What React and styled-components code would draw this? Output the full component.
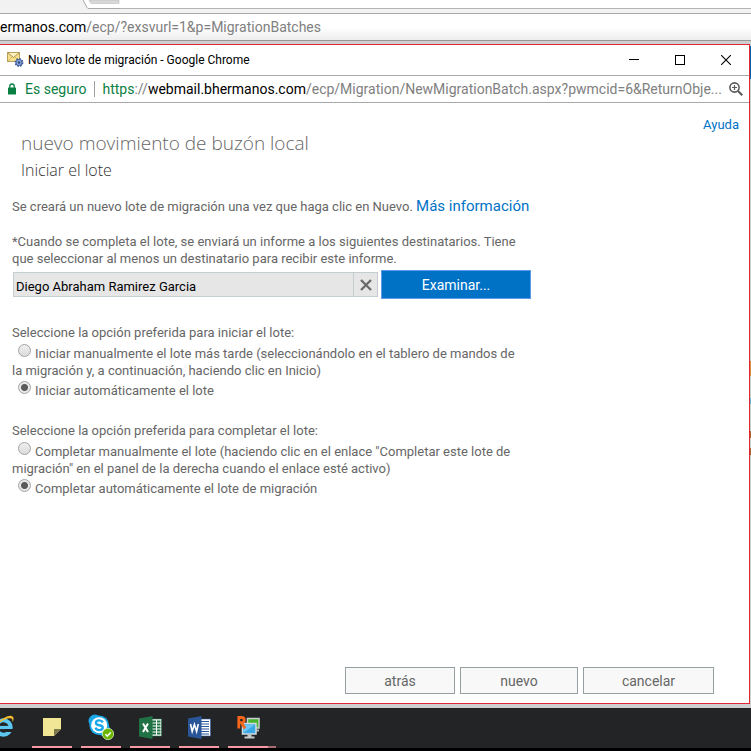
import React, { useState } from 'react';
import styled, { createGlobalStyle } from 'styled-components';

function MailGearIcon() {
    return (
        <svg width="17" height="16" viewBox="0 0 17 16" aria-hidden="true">
            <rect x="0.5" y="0.5" width="12" height="9" fill="#f7e08a" stroke="#b8a05c" />
            <path d="M1 1l5.5 4.500L12 1" fill="#fdf3c0" stroke="#a58f4c" />
            <path d="M1 9l4-4M12 9L8 5" stroke="#d3bb6c" fill="none" />
            <circle cx="12" cy="10.5" r="3.600" fill="#5673b4" stroke="#3c5896" strokeWidth="1.6" strokeDasharray="1.6 1.2" />
            <circle cx="12" cy="10.5" r="2.4" fill="#8ea8dc" />
            <circle cx="12" cy="10.5" r="1.2" fill="#2b4379" />
        </svg>
    );
}

function LockIcon() {
    return (
        <svg width="8" height="12" viewBox="0 0 8 12" aria-hidden="true">
            <path d="M1.8 5V3.2a2.2 2.2 0 0 1 4.4 0V5" fill="none" stroke="#0b8043" strokeWidth="1.3" />
            <rect x="0" y="4.5" width="8" height="7" rx="0.6" fill="#0b8043" />
        </svg>
    );
}

function ZoomIcon() {
    return (
        <svg width="14" height="14" viewBox="0 0 14 14" fill="none" stroke="#5a5a5a" aria-hidden="true">
            <circle cx="5.5" cy="5.5" r="4.6" strokeWidth="1.6" />
            <path d="M9 9l4.3 4.3" strokeWidth="2" />
            <path d="M3 5.5h5M5.5 3v5" strokeWidth="1.2" />
        </svg>
    );
}

function MinimizeIcon() {
    return (
        <svg width="10" height="10" viewBox="0 0 10 10" aria-hidden="true">
            <path d="M0 4.5h10" stroke="#000" />
        </svg>
    );
}

function MaximizeIcon() {
    return (
        <svg width="10" height="10" viewBox="0 0 10 10" aria-hidden="true">
            <rect x="0.5" y="0.5" width="9" height="9" fill="none" stroke="#000" />
        </svg>
    );
}

function CloseIcon() {
    return (
        <svg width="10" height="10" viewBox="0 0 10 10" aria-hidden="true">
            <path d="M0 0l10 10M10 0L0 10" stroke="#000" strokeWidth="1.1" />
        </svg>
    );
}

function ClearIcon() {
    return (
        <svg width="12" height="12" viewBox="0 0 12 12" aria-hidden="true">
            <path d="M1 1l10 10M11 1L1 11" stroke="#6b6b6b" strokeWidth="2.4" />
        </svg>
    );
}

function TabShape() {
    return (
        <svg width="120" height="9" viewBox="0 0 120 9" aria-hidden="true">
            <path d="M83 0l4 7.5q.5 1 2 1H120V0z" fill="#fff" />
            <path d="M83 0l4 7.5q.5 1 2 1H120" fill="none" stroke="#a9a9a9" />
            <path d="M89 0h30v3.500h-27q-1.500 0-2-1.500z" fill="#d8d8d8" stroke="#bdbdbd" strokeWidth="0.6" />
        </svg>
    );
}

function ExplorerIcon() {
    return (
        <svg width="15" height="24" viewBox="0 0 15 24" aria-hidden="true">
            <circle cx="3.500" cy="12.500" r="7.200" fill="none" stroke="#5cc8f2" strokeWidth="4" />
            <path d="M-3 12.500H11" stroke="#5cc8f2" strokeWidth="3.200" />
            <path d="M5 14.100H14V17H7z" fill="#232426" />
            <path d="M-1 6.500C5 2-.5 5.500 4 3C8 .8 11 .2 12.600 1.500C14.200 2.800 13.600 5.500 12.500 7.500C12.800 4.800 12.300 3.500 10.500 3.200C7.500 2.700 3 4.800-1 8z" fill="#f3bd2f" />
        </svg>
    );
}

function NotesIcon() {
    return (
        <svg width="18" height="18" viewBox="0 0 18 18" aria-hidden="true">
            <path d="M0 0h18v11l-7 7H0z" fill="#f1e596" />
            <path d="M11 18V11h7z" fill="#7c764c" />
        </svg>
    );
}

function SkypeIcon() {
    return (
        <svg width="26" height="26" viewBox="0 0 26 26" aria-hidden="true">
            <circle cx="7" cy="7" r="6.500" fill="#19a9ea" />
            <circle cx="15.500" cy="15.500" r="6.500" fill="#19a9ea" />
            <circle cx="11.200" cy="11.200" r="9.800" fill="#19a9ea" />
            <circle cx="11.200" cy="11.200" r="8" fill="#fff" />
            <path d="M14.800 8.400C14 6.900 12.700 6.400 11.200 6.400C9.300 6.400 7.900 7.200 7.900 8.900C7.900 12 14.700 10.500 14.700 13.500C14.700 15.200 13.100 16.100 11.200 16.100C9.400 16.100 8.100 15.400 7.500 13.700" fill="none" stroke="#19a9ea" strokeWidth="2.400" />
            <circle cx="20" cy="20" r="5.700" fill="#6bb700" stroke="#e9f6d5" strokeWidth="0.700" />
            <path d="M17.400 20.200l1.900 1.900 3.500-3.700" fill="none" stroke="#fff" strokeWidth="1.500" />
        </svg>
    );
}

function ExcelIcon() {
    return (
        <svg width="23" height="23" viewBox="0 0 23 23" aria-hidden="true">
            <rect x="12" y="3" width="10.500" height="17" fill="#fff" stroke="#207245" strokeWidth="0.600" />
            <path d="M13 5.500h4M18 5.500h3.500M13 8.500h4M18 8.500h3.500M13 11.500h4M18 11.500h3.500M13 14.500h4M18 14.500h3.500M13 17.500h4M18 17.500h3.500" stroke="#207245" strokeWidth="1.800" />
            <path d="M0 2.500L13.500 0v23L0 20.500z" fill="#207245" />
            <path d="M4 7.500l5 8.500M9 7.500l-5 8.500" stroke="#fff" strokeWidth="2" />
        </svg>
    );
}

function WordIcon() {
    return (
        <svg width="23" height="23" viewBox="0 0 23 23" aria-hidden="true">
            <rect x="12" y="3" width="10.500" height="17" fill="#fff" stroke="#2a5699" strokeWidth="0.600" />
            <path d="M13 5.500h8M13 8h8M13 10.500h8M13 13h8M13 15.500h8M13 18h8" stroke="#2a5699" strokeWidth="1.100" />
            <path d="M0 2.500L13.500 0v23L0 20.500z" fill="#2a5699" />
            <path d="M2.500 8l1.700 7.500 2.200-7 2.200 7 1.700-7.500" fill="none" stroke="#fff" strokeWidth="1.600" />
        </svg>
    );
}

function RemoteIcon() {
    return (
        <svg width="23" height="23" viewBox="0 0 23 23" aria-hidden="true">
            <rect x="10.500" y="2.500" width="11.500" height="9.500" fill="#46b52c" stroke="#c9d0cf" strokeWidth="1.500" />
            <path d="M18 14.500h4" stroke="#aeb6b8" strokeWidth="2" />
            <rect x="5.500" y="7.500" width="13.500" height="10.500" fill="#3aa8e4" stroke="#d4dce0" strokeWidth="1.500" />
            <path d="M6.500 17L18 8.500H6.500z" fill="#6cc5f2" />
            <path d="M10.500 18.500h4v2h3v2h-10v-2h3z" fill="#c3c9cb" />
            <path d="M1.800 12.500V1.500H4.500Q7.300 1.500 7.300 4T4.500 6.700H2M4.500 6.700L8 12.500" fill="none" stroke="#f4661b" strokeWidth="2.800" />
        </svg>
    );
}

const OPTION_GROUPS = [
    {
        name: 'start',
        title: 'Seleccione la opción preferida para iniciar el lote:',
        options: [
            {
                value: 'manual',
                text: 'Iniciar manualmente el lote más tarde (seleccionándolo en el tablero de mandos de la migración y, a continuación, haciendo clic en Inicio)',
            },
            { value: 'auto', text: 'Iniciar automáticamente el lote' },
        ],
    },
    {
        name: 'complete',
        title: 'Seleccione la opción preferida para completar el lote:',
        options: [
            {
                value: 'manual',
                text: 'Completar manualmente el lote (haciendo clic en el enlace "Completar este lote de migración" en el panel de la derecha cuando el enlace esté activo)',
            },
            { value: 'auto', text: 'Completar automáticamente el lote de migración' },
        ],
    },
];

const TASKS = [
    { label: 'Notas', icon: <NotesIcon /> },
    { label: 'Skype', icon: <SkypeIcon /> },
    { label: 'Excel', icon: <ExcelIcon /> },
    { label: 'Word', icon: <WordIcon /> },
    { label: 'Escritorio remoto', icon: <RemoteIcon /> },
];

function OptionGroup({ group }) {
    const [selected, setSelected] = useState('auto');

    return (
        <Group>
            <GroupTitle>{group.title}</GroupTitle>
            {group.options.map((option) => (
                <Option key={option.value}>
                    <Radio
                        type="radio"
                        name={group.name}
                        checked={selected === option.value}
                        onChange={() => setSelected(option.value)}
                    />
                    {option.text}
                </Option>
            ))}
        </Group>
    );
}

function App() {
    const [recipient, setRecipient] = useState('Diego Abraham Ramirez Garcia');

    return (
        <Screen>
            <GlobalStyle />
            <TabStrip>
                <TabShape />
                <TabLine />
            </TabStrip>
            <BackAddress>
                <b>ermanos.com</b>/ecp/?exsvurl=1&amp;p=MigrationBatches
            </BackAddress>
            <Desktop>
                <Window>
                    <TitleBar>
                        <MailGearIcon />
                        <WindowTitle>Nuevo lote de migración - Google Chrome</WindowTitle>
                        <WindowButton aria-label="Minimizar"><MinimizeIcon /></WindowButton>
                        <WindowButton aria-label="Maximizar"><MaximizeIcon /></WindowButton>
                        <WindowButton aria-label="Cerrar"><CloseIcon /></WindowButton>
                    </TitleBar>
                    <AddressBar>
                        <LockIcon />
                        <Secure>Es seguro</Secure>
                        <Url>
                            <i>https</i>://<b>webmail.bhermanos.com</b>/ecp/Migration/NewMigrationBatch.aspx?pwmcid=6&amp;ReturnObje...
                        </Url>
                        <ZoomIcon />
                    </AddressBar>
                    <Page>
                        <Help href="#ayuda">Ayuda</Help>
                        <Title>nuevo movimiento de buzón local</Title>
                        <Subtitle>Iniciar el lote</Subtitle>
                        <Form>
                            <Intro>
                                Se creará un nuevo lote de migración una vez que haga clic en Nuevo.{' '}
                                <MoreLink href="#info">Más información</MoreLink>
                            </Intro>
                            <RecipientLabel htmlFor="recipient">
                                *Cuando se completa el lote, se enviará un informe a los siguientes destinatarios. Tiene que seleccionar al menos un destinatario para recibir este informe.
                            </RecipientLabel>
                            <RecipientRow>
                                <RecipientInput id="recipient" readOnly value={recipient} />
                                <ClearButton type="button" aria-label="Quitar" onClick={() => setRecipient('')}>
                                    <ClearIcon />
                                </ClearButton>
                                <BrowseButton type="button">Examinar...</BrowseButton>
                            </RecipientRow>
                            {OPTION_GROUPS.map((group) => (
                                <OptionGroup key={group.name} group={group} />
                            ))}
                        </Form>
                        <Footer>
                            <FooterButton $width={110}>atrás</FooterButton>
                            <FooterButton $width={118}>nuevo</FooterButton>
                            <FooterButton $width={131}>cancelar</FooterButton>
                        </Footer>
                    </Page>
                </Window>
            </Desktop>
            <Taskbar>
                <BrowserTask aria-label="Internet Explorer"><ExplorerIcon /></BrowserTask>
                {TASKS.map((task) => (
                    <Task key={task.label} aria-label={task.label}>{task.icon}</Task>
                ))}
                <TaskStack />
            </Taskbar>
        </Screen>
    );
}

const GlobalStyle = createGlobalStyle`
    * {
        box-sizing: border-box;
    }

    body {
        margin: 0;
        font-family: Roboto, "Open Sans", sans-serif;
        font-size: 13px;
        color: #666;
    }

    button, input {
        font-family: inherit;
    }

    button {
        padding: 0;
    }

    svg {
        display: block;
        flex: none;
    }
`;

const Screen = styled.div`
    display: flex;
    flex-direction: column;
    min-height: 100vh;
    background: #d3d3d3;
    overflow: hidden;
`;

const TabStrip = styled.div`
    display: flex;
    height: 14px;
    background: #f2f2f2;
    border-bottom: 1px solid #a9a9a9;
`;

const TabLine = styled.div`
    flex: 1;
    height: 9px;
    background: #fff;
    border-bottom: 1px solid #b4b4b4;
`;

const BackAddress = styled.div`
    height: 27px;
    line-height: 27px;
    font-size: 14px;
    color: #808080;
    white-space: nowrap;
    background: linear-gradient(#fff 50%, #ededed);
    border-bottom: 1px solid #979797;

    b {
        font-weight: 400;
        color: #000;
    }
`;

const Desktop = styled.div`
    flex: 1;
    display: flex;
    padding: 3px 1px 4px 0;
    background:
        linear-gradient(#0a5fae, #0a5fae) right 5px / 1px 33px no-repeat,
        linear-gradient(#d98f45, #d98f45) right 320px / 1px 15px no-repeat,
        linear-gradient(#69b4dc, #69b4dc) right 357px / 1px 6px no-repeat,
        linear-gradient(#a86235, #a86235) right 390px / 1px 7px no-repeat,
        linear-gradient(#a86235, #a86235) right 407px / 1px 7px no-repeat,
        #cfcfcf;
`;

const Window = styled.div`
    flex: 1;
    min-width: 0;
    display: flex;
    flex-direction: column;
    background: #fff;
    border: 1px solid #e32636;
    border-left: 0;
`;

const TitleBar = styled.div`
    display: flex;
    align-items: center;
    height: 31px;
    padding-left: 7px;
    border-bottom: 1px solid #a8a8a8;
`;

const WindowTitle = styled.div`
    flex: 1;
    margin-left: 4px;
    font-size: 12px;
    color: #000;
`;

const WindowButton = styled.button`
    display: flex;
    align-items: center;
    justify-content: center;
    width: 46px;
    height: 28px;
    background: none;
    border: 0;
`;

const AddressBar = styled.div`
    display: flex;
    align-items: center;
    height: 27px;
    padding: 0 6px 0 8px;
    font-size: 14px;
    border-bottom: 1px solid #a8a8a8;
`;

const Secure = styled.div`
    margin-left: 9px;
    padding-right: 8px;
    line-height: 16px;
    color: #0b8043;
    border-right: 1px solid #a0a0a0;
    white-space: nowrap;
`;

const Url = styled.div`
    flex: 1;
    min-width: 0;
    margin-left: 7px;
    color: #808080;
    white-space: nowrap;
    overflow: hidden;

    b {
        font-weight: 400;
        color: #000;
    }

    i {
        font-style: normal;
        color: #0b8043;
    }
`;

const Page = styled.main`
    flex: 1;
    display: flex;
    flex-direction: column;
    padding: 13px 10px 9px 12px;
`;

const Help = styled.a`
    align-self: flex-end;
    line-height: 17px;
    color: #0072c6;
    text-decoration: none;
`;

const Title = styled.h1`
    margin: 0 0 0 9px;
    font-family: "Open Sans", sans-serif;
    font-size: 19px;
    font-weight: 300;
    line-height: 20px;
`;

const Subtitle = styled.h2`
    margin: 5px 0 0 9px;
    font-family: "Open Sans", sans-serif;
    font-size: 16px;
    font-weight: 300;
    line-height: 24px;
    color: #333;
`;

const Form = styled.div`
    max-width: 519px;
    margin-top: 14px;
    line-height: 17px;
`;

const Intro = styled.p`
    margin: 0;
    line-height: 20px;
`;

const MoreLink = styled.a`
    font-size: 15px;
    color: #0072c6;
    text-decoration: none;
`;

const RecipientLabel = styled.label`
    display: block;
    margin-top: 16px;
`;

const RecipientRow = styled.div`
    display: flex;
    align-items: center;
    margin: 3px 0 0 1px;
    padding-bottom: 2px;
`;

const RecipientInput = styled.input`
    flex: 1;
    min-width: 0;
    height: 25px;
    padding: 4px 2px 0;
    font-size: 13px;
    color: #000;
    background: #e6e6e6;
    border: 1px solid #c5cdd0;
`;

const ClearButton = styled.button`
    display: flex;
    align-items: center;
    justify-content: center;
    width: 24px;
    height: 25px;
    background: #e6e6e6;
    border: 1px solid #c5cdd0;
    border-left: 0;
`;

const BrowseButton = styled.button`
    width: 150px;
    height: 29px;
    margin-left: 3px;
    font-size: 14px;
    color: #fff;
    background: #0072c6;
    border: 1px solid #5b9bea;
`;

const Group = styled.fieldset`
    margin: 23px 0 0;
    padding: 0;
    border: 0;
`;

const GroupTitle = styled.legend`
    padding: 0;
    margin-bottom: 1px;
`;

const Option = styled.label`
    display: block;
    padding: 2px 10px 0 0;
`;

const Radio = styled.input`
    appearance: none;
    width: 13px;
    height: 13px;
    margin: 0 4px 1px 6px;
    border: 1px solid #a3a3a3;
    border-radius: 50%;
    background: linear-gradient(#eee, #dcdcdc);

    &:checked {
        background: radial-gradient(circle, #5a5a5a 3px, #e8e8e8 4px);
    }
`;

const Footer = styled.div`
    display: flex;
    justify-content: flex-end;
    gap: 5px;
    margin-top: auto;
    padding-right: 25px;
`;

const FooterButton = styled.button`
    width: ${(props) => props.$width}px;
    height: 27px;
    font-size: 14px;
    color: #666;
    background: #f8f8f8;
    border: 1px solid #95a0a2;
`;

const Taskbar = styled.nav`
    display: flex;
    height: 43px;
    background: #232426;
    border-bottom: 3px solid #000;
`;

const Task = styled.button`
    display: flex;
    align-items: center;
    justify-content: center;
    width: 40px;
    height: 40px;
    margin-right: 9px;
    background: none;
    border: 0;
    border-bottom: 2px solid #f59aa3;

    &:nth-last-child(2) {
        margin-right: 0;
    }
`;

const BrowserTask = styled(Task)`
    justify-content: flex-start;
    width: 23px;
    border-bottom-color: transparent;
`;

const TaskStack = styled.span`
    align-self: flex-end;
    width: 8px;
    height: 2px;
    background: #a86e74;
`;

export default App;
